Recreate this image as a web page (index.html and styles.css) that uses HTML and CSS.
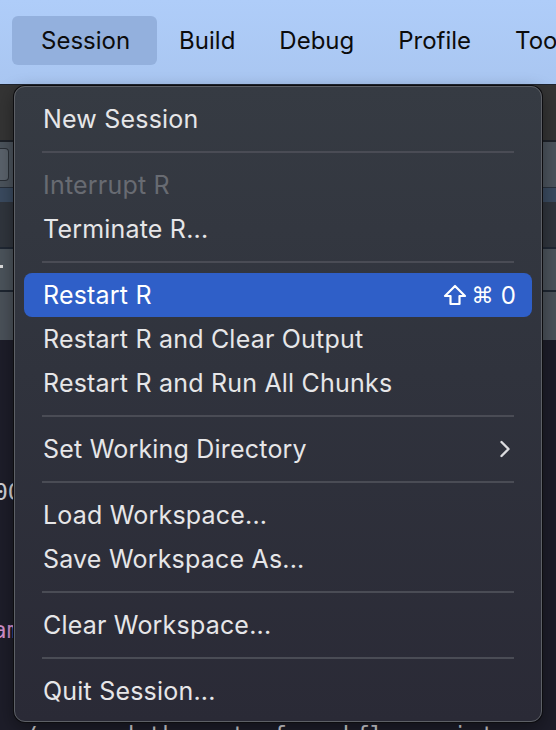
FILE: index.html
```html
<!DOCTYPE html>
<html>
<head>
<meta charset="utf-8">
<link rel="stylesheet" href="styles.css">
</head>
<body>
<div class="menubar">
  <div class="mb-item active">Session</div>
  <div class="mb-item">Build</div>
  <div class="mb-item">Debug</div>
  <div class="mb-item">Profile</div>
  <div class="mb-item">Tools</div>
</div>
<div class="app">
  <div class="toolbar"></div>
  <div class="tabs"><div class="tab-btn"></div></div>
  <div class="blueband"></div>
  <div class="darkrow"></div>
  <div class="grayrow"><span class="tick"></span></div>
  <div class="grayrow second"></div>
  <div class="editor">
    <div class="code l1">000ut</div>
    <div class="code pink l2">name</div>
    <div class="code l3">ne/zen and the art of workflow maintenance</div>
  </div>
</div>

<div class="menu">
  <div class="item">New Session</div>
  <div class="sep"></div>
  <div class="item disabled">Interrupt R</div>
  <div class="item">Terminate R...</div>
  <div class="sep"></div>
  <div class="item selected"><span>Restart R</span>
    <span class="shortcut">
      <svg class="shift" width="24" height="22" viewBox="0 0 24 22"><path d="M12 2 L22 12 L16.5 12 L16.5 20 L7.5 20 L7.5 12 L2 12 Z" fill="none" stroke="#fff" stroke-width="2.2" stroke-linejoin="round"/></svg>
      <span class="cmd">⌘</span><span class="zero">0</span>
    </span>
  </div>
  <div class="item">Restart R and Clear Output</div>
  <div class="item">Restart R and Run All Chunks</div>
  <div class="sep"></div>
  <div class="item"><span>Set Working Directory</span>
    <svg class="chev" width="12" height="18" viewBox="0 0 12 18"><path d="M2.5 2 L9.5 9 L2.5 16" fill="none" stroke="#dcdcdf" stroke-width="2.4" stroke-linecap="round" stroke-linejoin="round"/></svg>
  </div>
  <div class="sep"></div>
  <div class="item">Load Workspace...</div>
  <div class="item">Save Workspace As...</div>
  <div class="sep"></div>
  <div class="item">Clear Workspace...</div>
  <div class="sep"></div>
  <div class="item">Quit Session...</div>
</div>
</body>
</html>
```

FILE: styles.css
```css
* { box-sizing: border-box; }
html, body {
  margin: 0;
  padding: 0;
}
body {
  width: 556px;
  height: 730px;
  overflow: hidden;
  background: #1d1d29;
  font-family: Inter, "Liberation Sans", sans-serif;
  position: relative;
}
.menubar {
  height: 85px;
  background: linear-gradient(#afcdf9, #a9c6f1);
  border-bottom: 1px solid #1f2530;
  display: flex;
  align-items: center;
  padding-left: 12px;
  padding-bottom: 3px;
  overflow: hidden;
}
.mb-item {
  font-size: 24px;
  color: #0c0c0c;
  padding: 0 22px;
  height: 49px;
  display: flex;
  align-items: center;
  white-space: nowrap;
  flex: none;
}
.mb-item.active {
  background: #93b0dd;
  border-radius: 6px;
  padding: 0 27px 0 29px;
}
.app {
  display: flex;
  flex-direction: column;
}
.toolbar {
  height: 57px;
  background: #343434;
  border-bottom: 2px solid #1e2229;
}
.tabs {
  height: 45px;
  background: #4b535c;
  padding-top: 6px;
}
.tab-btn {
  width: 9px;
  height: 33px;
  border: 1px solid #2a2f36;
  border-left: none;
  border-radius: 0 4px 4px 0;
  background: #5a626b;
}
.blueband {
  height: 15px;
  background: #3a4a5f;
  border-top: 1px solid #28303b;
}
.darkrow {
  height: 47px;
  background: #30353d;
  border-bottom: 2px solid #1f2733;
}
.grayrow {
  height: 43px;
  background: #4b535b;
  border-bottom: 2px solid #1e2631;
}
.grayrow.second {
  height: 48px;
  border-bottom: none;
  background: #4a5159;
}
.tick {
  display: block;
  width: 3px;
  height: 3px;
  background: #ddd;
  margin-top: 16px;
}
.editor {
  background: #1d1d29;
  flex: 1;
  font-family: "DejaVu Sans Mono", "Liberation Mono", monospace;
  font-size: 23px;
  color: #d2d2d6;
}
.code {
  white-space: nowrap;
  line-height: 30px;
}
.l1 { margin-top: 137px; margin-left: -6px; }
.pink { color: #d08fc9; }
.l2 { margin-top: 108px; margin-left: -21px; }
.l3 { margin-top: 75px; margin-left: -4px; }

.menu {
  position: absolute;
  left: 14px;
  top: 86px;
  width: 528px;
  height: 636px;
  border-radius: 11px;
  border: 1px solid #5d6066;
  box-shadow: 0 0 0 1px #0d0d10, 0 6px 18px rgba(0,0,0,0.4);
  background: linear-gradient(#363b43 0%, #30333d 45%, #2a2a36 100%);
  padding: 10px 9px 8px 9px;
  display: flex;
  flex-direction: column;
  font-family: Inter, "Liberation Sans", sans-serif;
}
.item {
  height: 44px;
  flex: none;
  display: flex;
  align-items: center;
  justify-content: space-between;
  padding: 0 16px 0 19px;
  font-size: 25px;
  color: #e6e6e8;
  border-radius: 8px;
  white-space: nowrap;
  letter-spacing: 0.2px;
}
.item.disabled { color: #686b72; }
.item.selected {
  background: #2f5fc8;
  color: #ffffff;
}
.shortcut {
  display: flex;
  align-items: center;
  gap: 4px;
}
.cmd {
  font-family: "DejaVu Sans", sans-serif;
  font-size: 22px;
}
.zero { margin-left: 3px; font-size: 24px; }
.chev { margin-right: 5px; }
.sep {
  height: 22px;
  flex: none;
  margin: 0 18px;
  display: flex;
  align-items: center;
}
.sep::before {
  content: "";
  display: block;
  width: 100%;
  height: 2px;
  background: #4a4c55;
}
```
